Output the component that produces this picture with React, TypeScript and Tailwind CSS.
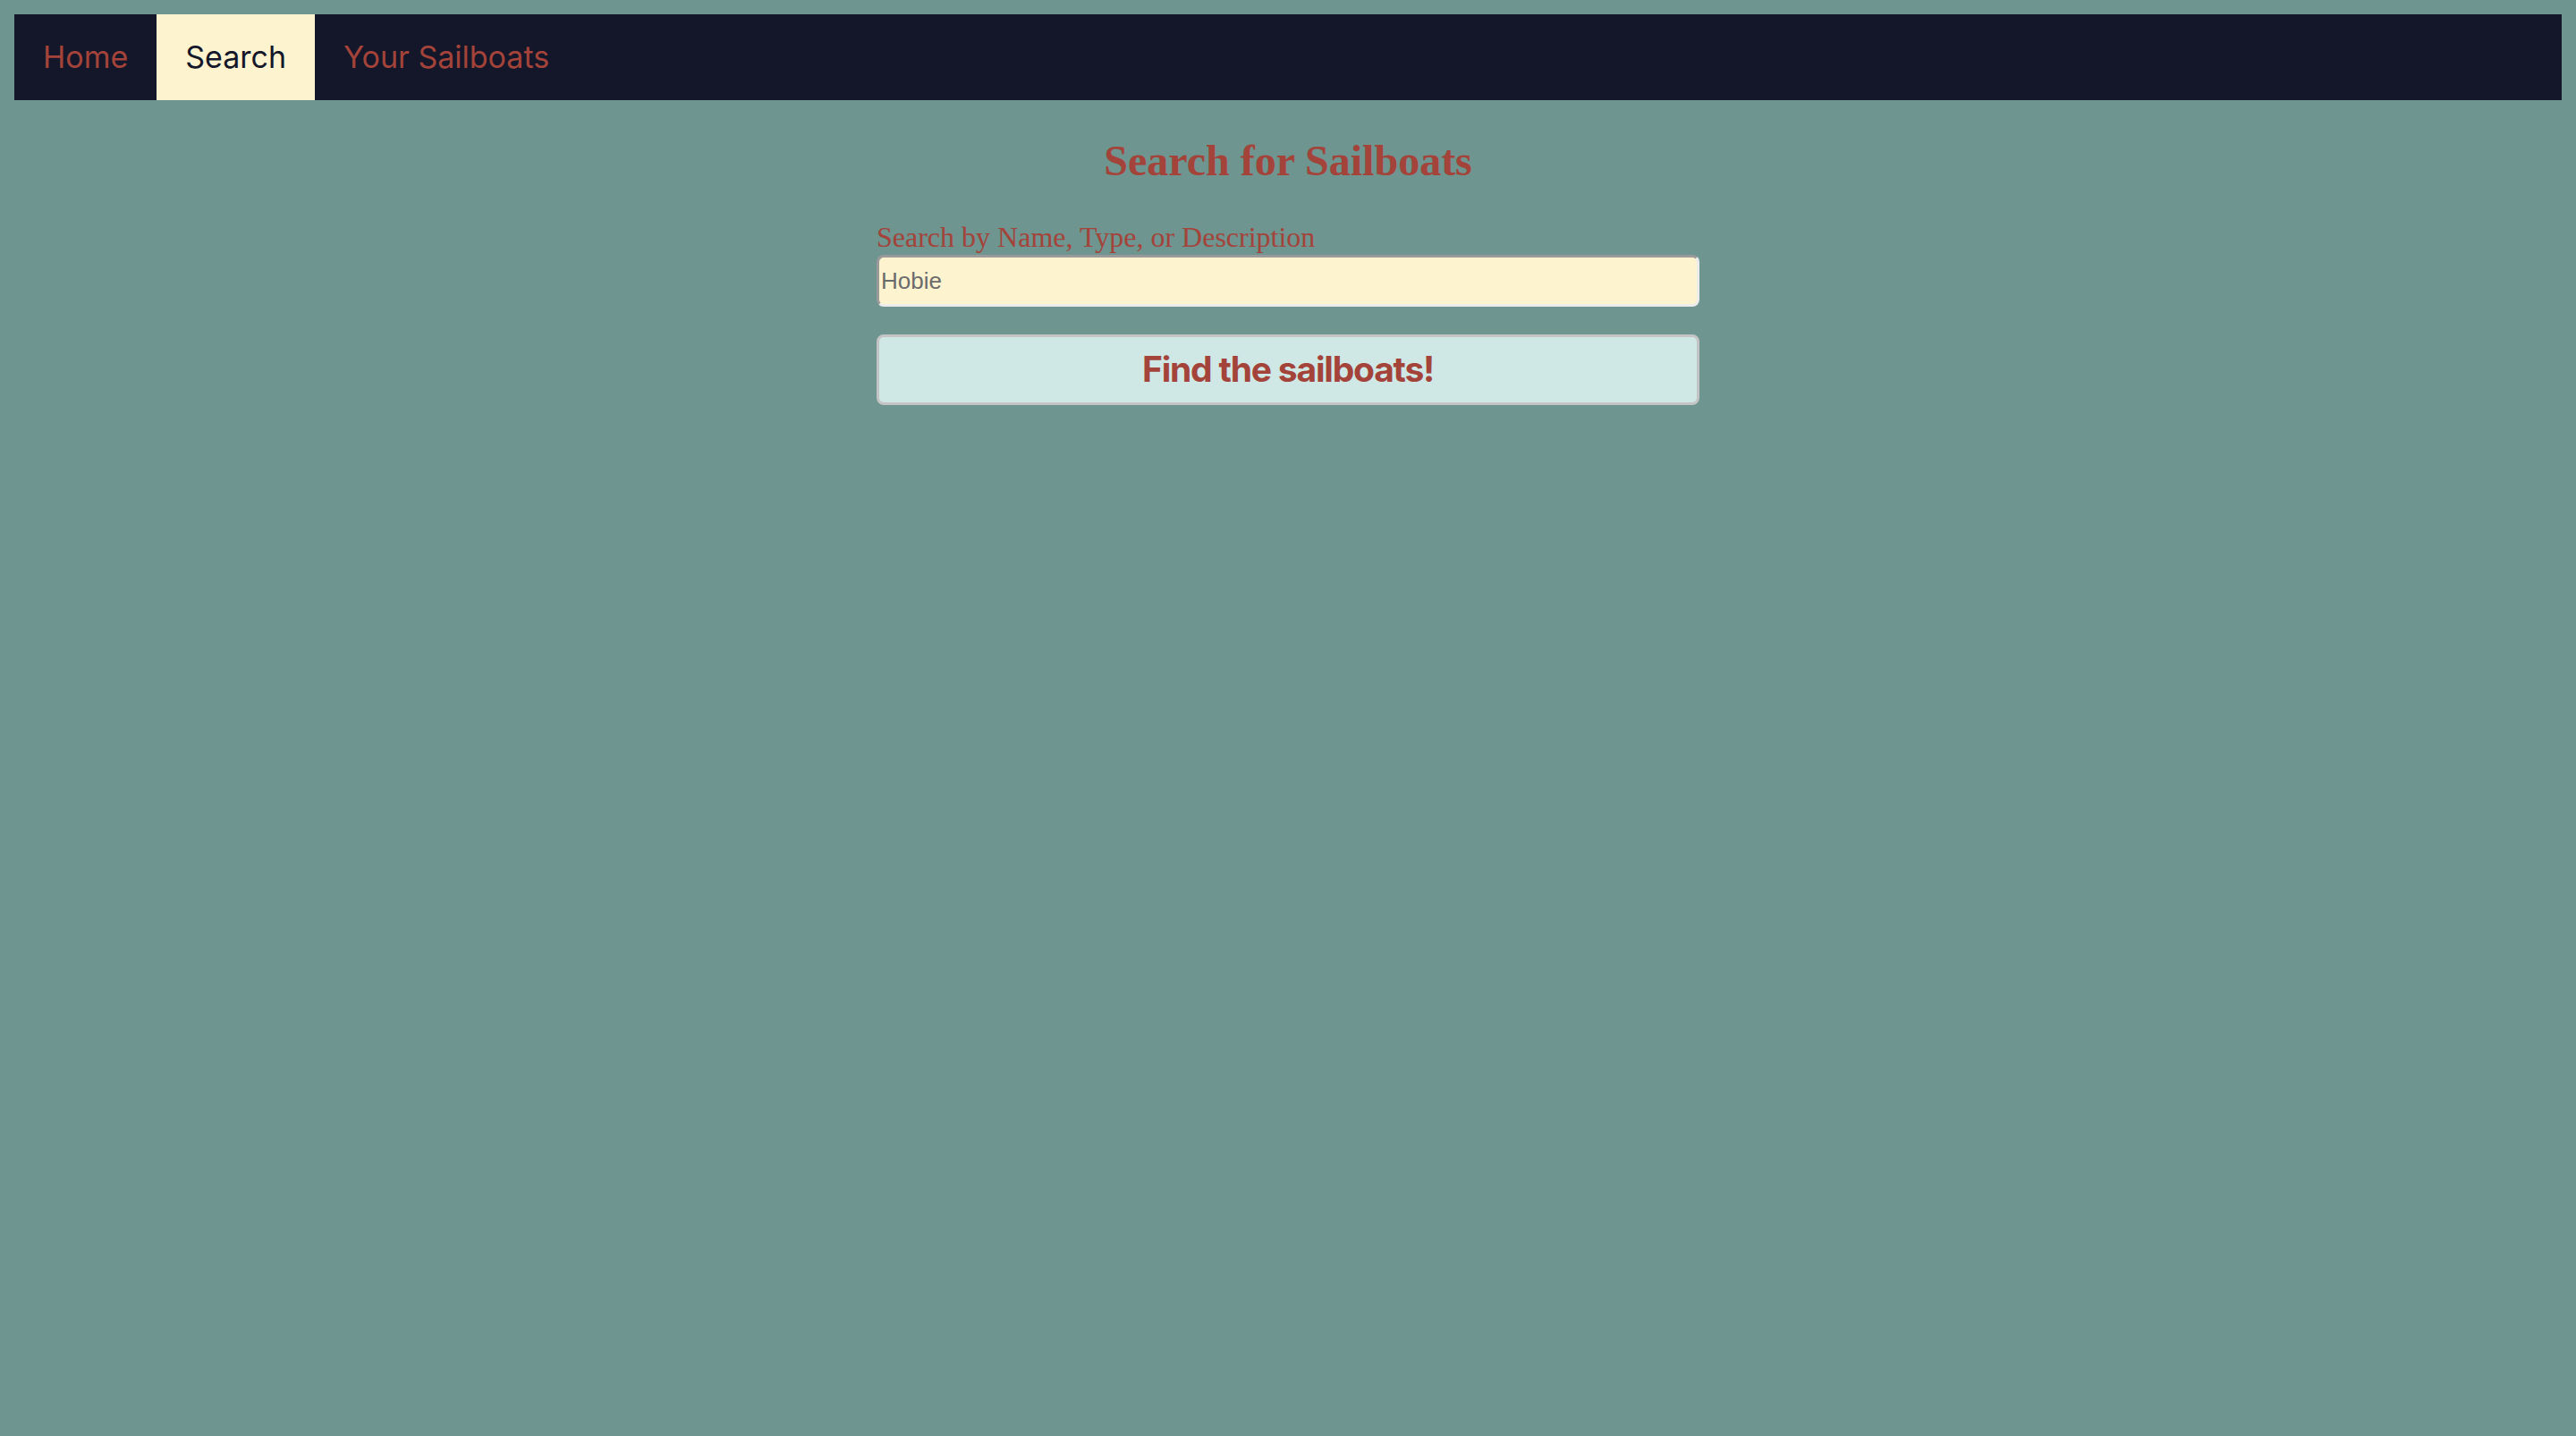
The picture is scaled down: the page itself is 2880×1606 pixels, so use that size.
import {useState} from "react";

const NAV_ITEMS = ["Home", "Search", "Your Sailboats"];

export default function App() {
  const [query, setQuery] = useState("Hobie");
  const active = "Search";

  return (
      <div className="min-h-[1606px] bg-[#6e958f] p-4">
        <nav className="flex h-[96px] bg-[#141729] font-['Inter',sans-serif]">
          {NAV_ITEMS.map((item) => (
              <a key={item} href="#"
                 className={item === active
                     ? "px-[32px] py-[28px] text-[34px] leading-[40px] bg-[#fdf3cf] text-[#141729]"
                     : "px-[32px] py-[28px] text-[34px] leading-[40px] text-[#a3433a]"}>
                {item}
              </a>
          ))}
        </nav>

        <h2 className="mt-[40px] mb-[40px] text-center text-[48px] leading-[55px] font-bold text-[#a3433a] font-['Liberation_Serif',serif]">
          Search for Sailboats
        </h2>

        <form className="mx-auto w-[920px]" onSubmit={(e) => e.preventDefault()}>
          <label htmlFor="q"
                 className="block text-[32px] leading-[36px] text-[#a3433a] font-['Liberation_Serif',serif]">
            Search by Name, Type, or Description
          </label>
          <input id="q" value={query} onChange={(e) => setQuery(e.target.value)}
                 className="mt-[2px] block h-[58px] w-full rounded-[8px] border-[3px] border-t-[#9a9a9a] border-l-[#9a9a9a] border-b-[#ececec] border-r-[#ececec] bg-[#fdf3cf] px-[2px] text-[26px] text-[#6b6b6b] font-['Liberation_Sans',sans-serif] outline-none"/>
          <button type="submit"
                  className="mt-[31px] block h-[79px] w-full rounded-[8px] border-[3px] border-[#c4c4c4] bg-[#cfe8e5] text-[39px] font-bold tracking-[-1.2px] text-[#a3433a] font-['Inter',sans-serif]">
            Find the sailboats!
          </button>
        </form>
      </div>
  );
}
